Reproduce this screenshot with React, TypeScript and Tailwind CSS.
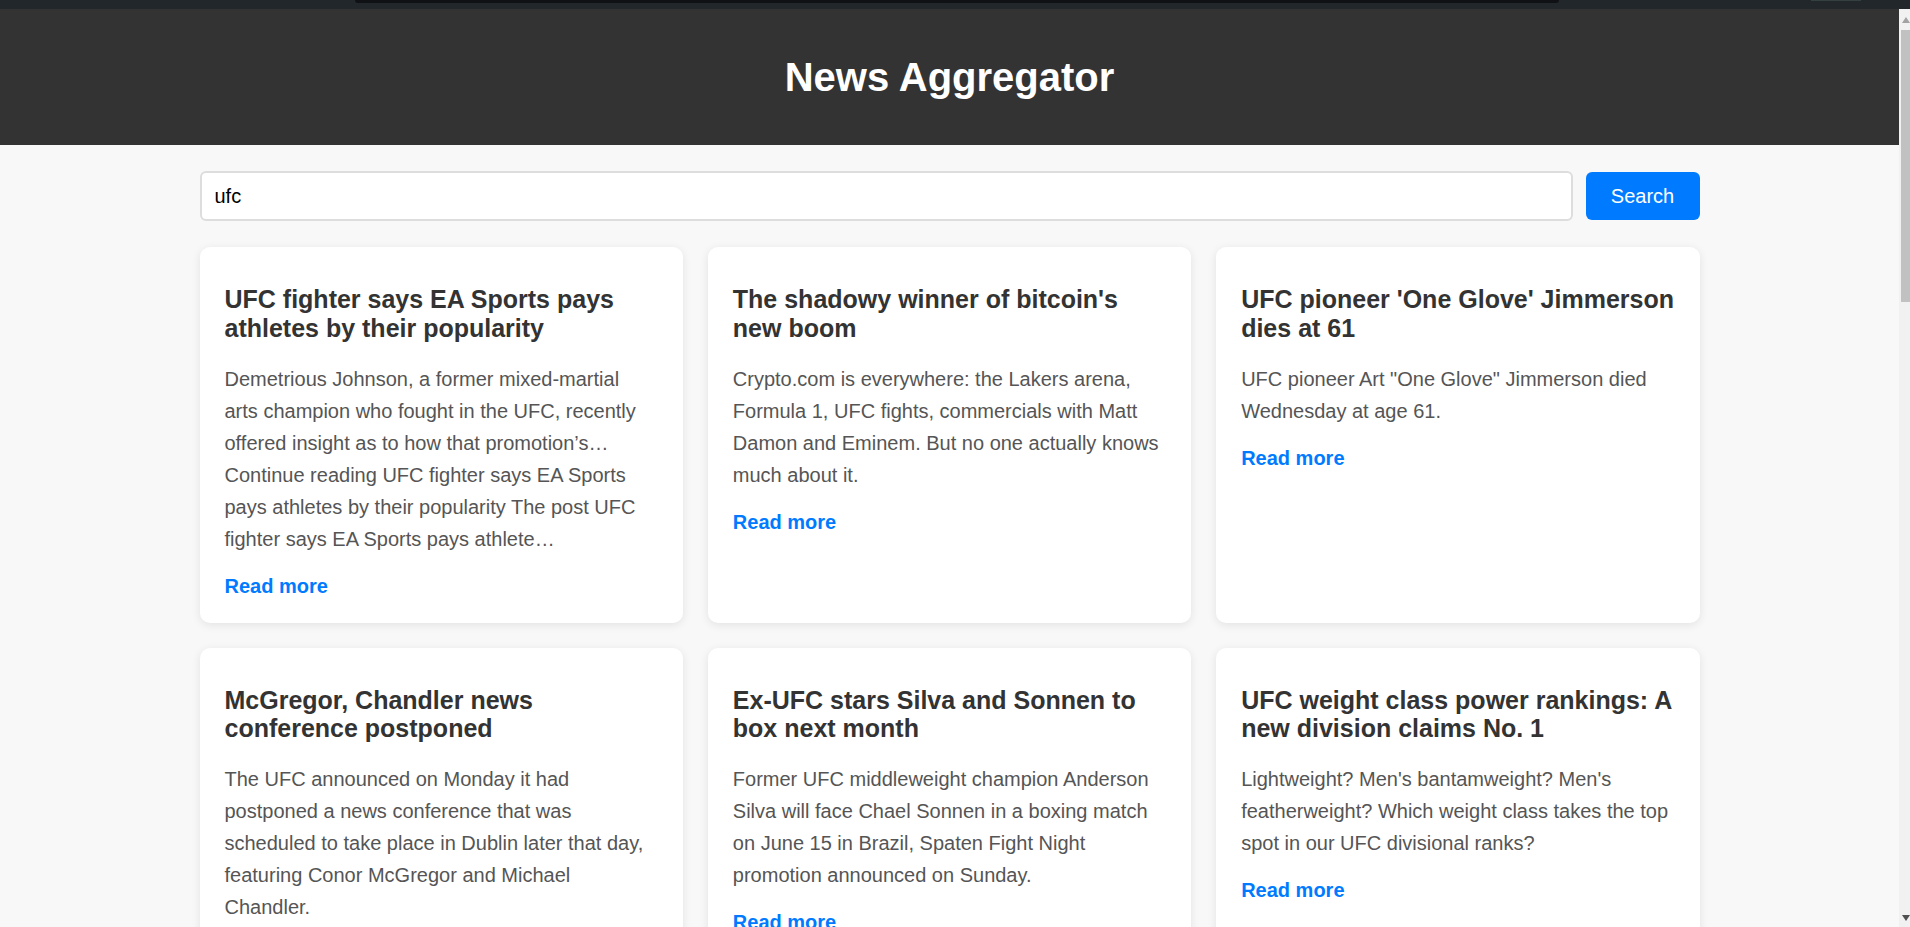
import React from "react";

type Article = { title: string; description: string };

const articles: Article[] = [
  {
    title: "UFC fighter says EA Sports pays athletes by their popularity",
    description:
      "Demetrious Johnson, a former mixed-martial arts champion who fought in the UFC, recently offered insight as to how that promotion’s… Continue reading UFC fighter says EA Sports pays athletes by their popularity The post UFC fighter says EA Sports pays athlete…",
  },
  {
    title: "The shadowy winner of bitcoin's new boom",
    description:
      "Crypto.com is everywhere: the Lakers arena, Formula 1, UFC fights, commercials with Matt Damon and Eminem. But no one actually knows much about it.",
  },
  {
    title: "UFC pioneer 'One Glove' Jimmerson dies at 61",
    description: 'UFC pioneer Art "One Glove" Jimmerson died Wednesday at age 61.',
  },
  {
    title: "McGregor, Chandler news conference postponed",
    description:
      "The UFC announced on Monday it had postponed a news conference that was scheduled to take place in Dublin later that day, featuring Conor McGregor and Michael Chandler.",
  },
  {
    title: "Ex-UFC stars Silva and Sonnen to box next month",
    description:
      "Former UFC middleweight champion Anderson Silva will face Chael Sonnen in a boxing match on June 15 in Brazil, Spaten Fight Night promotion announced on Sunday.",
  },
  {
    title: "UFC weight class power rankings: A new division claims No. 1",
    description:
      "Lightweight? Men's bantamweight? Men's featherweight? Which weight class takes the top spot in our UFC divisional ranks?",
  },
];

function Card({ a }: { a: Article }) {
  return (
    <div className="bg-white rounded-[10px] shadow-[0_2px_10px_rgba(0,0,0,0.09)] px-[25px] pt-[38px] pb-[25px]">
      <h2 className="text-[25px] font-bold leading-[28.8px] text-[#333333] mb-[20px]">
        {a.title}
      </h2>
      <p className="text-[20px] leading-[32px] text-[#555555] mb-[20px]">
        {a.description}
      </p>
      <a href="#" className="block text-[20px] leading-[23px] font-bold text-[#007bff] w-fit">
        Read more
      </a>
    </div>
  );
}

export default function App() {
  return (
    <div
      className="w-[1910px] h-[927px] overflow-hidden flex flex-col bg-[#f8f8f8]"
      style={{ fontFamily: '"Liberation Sans", Arial, sans-serif' }}
    >
      {/* browser strip */}
      <div className="h-[9px] shrink-0 bg-[#22272b] flex items-start">
        <div className="ml-[355px] w-[1204px] h-[3px] bg-[#0f1114] rounded-b-[4px]" />
        <div className="ml-[252px] w-[50px] h-[1px] bg-[#34403f]" />
      </div>

      <div className="flex-1 flex min-h-0">
        {/* page */}
        <div className="flex-1 min-w-0 overflow-hidden">
          <header className="h-[136px] bg-[#333333] flex items-center justify-center">
            <h1 className="text-[40px] font-bold text-white leading-[46px]">News Aggregator</h1>
          </header>

          <main className="w-[1500px] mx-auto">
            <div className="flex items-center gap-[13px] pt-[26px]">
              <input
                type="text"
                defaultValue="ufc"
                className="flex-1 h-[50px] border-2 border-[#dddddd] rounded-[6px] bg-white px-[13px] text-[20px] text-black outline-none"
                style={{ fontFamily: '"Liberation Sans", Arial, sans-serif' }}
              />
              <button
                className="w-[114px] h-[48px] bg-[#007bff] rounded-[6px] text-white text-[20px]"
                style={{ fontFamily: '"Liberation Sans", Arial, sans-serif' }}
              >
                Search
              </button>
            </div>

            <div className="grid grid-cols-3 gap-[25px] mt-[26px]">
              {articles.map((a, i) => (
                <Card key={i} a={a} />
              ))}
            </div>
          </main>
        </div>

        {/* scrollbar */}
        <div className="w-[11px] shrink-0 bg-[#f1f1f1] flex flex-col items-center">
          <svg width="8" height="6" viewBox="0 0 8 6" className="mt-[8px] ml-[2px]">
            <polygon points="4,0 8,6 0,6" fill="#a3a3a3" />
          </svg>
          <div className="mt-[7px] ml-[2px] w-[9px] h-[272px] bg-[#c1c1c1]" />
          <div className="flex-1" />
          <svg width="8" height="6" viewBox="0 0 8 6" className="mb-[6px] ml-[2px]">
            <polygon points="0,0 8,0 4,6" fill="#505050" />
          </svg>
        </div>
      </div>
    </div>
  );
}
